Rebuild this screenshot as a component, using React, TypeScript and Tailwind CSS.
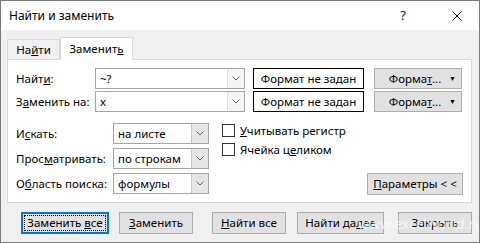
import React from 'react';

const font = { fontFamily: '"Noto Sans", "Liberation Sans", sans-serif' };

function Chevron() {
  return (
    <svg width="8" height="5" viewBox="0 0 8 5" className="text-[#606060]">
      <path d="M0.5 0.5 L4 4 L7.5 0.5" fill="none" stroke="currentColor" strokeWidth="1" />
    </svg>
  );
}

function Combo({ value, width, gray }: { value: string; width: string; gray?: boolean }) {
  return (
    <div className={`flex h-[21px] ${width} border border-[#a5a5a5] bg-white`}>
      <div className="flex flex-1 items-center pl-[4px] text-black">{value}</div>
      <div
        className={`flex w-[17px] items-center justify-center border-l ${
          gray ? 'border-[#c8c8c8] bg-[#e5e5e5]' : 'border-[#dcdcdc] bg-[#f5f5f5]'
        }`}
      >
        <Chevron />
      </div>
    </div>
  );
}

function Btn({ children, className = '' }: { children: React.ReactNode; className?: string }) {
  return (
    <div
      className={`flex h-[22px] items-center justify-center border border-[#adadad] bg-[#e1e1e1] text-black ${className}`}
    >
      {children}
    </div>
  );
}

function FormatBtn() {
  return (
    <div className="relative flex h-[21px] w-[88px] items-center justify-center border border-[#adadad] bg-[#e1e1e1] text-black">
      <span className="pr-[6px]">
        Форма<u>т</u>...
      </span>
      <span className="absolute right-[5px] top-[4px] text-[7px] leading-[12px]">▼</span>
    </div>
  );
}

function Check({ children }: { children: React.ReactNode }) {
  return (
    <div className="flex h-[19px] items-center">
      <div className="h-[13px] w-[13px] border border-[#333333] bg-white" />
      <span className="ml-[5px] text-black">{children}</span>
    </div>
  );
}

export default function App() {
  return (
    <div
      className="relative flex h-[243px] w-[480px] flex-col overflow-hidden border border-[#7a7a7a] bg-[#f0f0f0] text-[11.5px]"
      style={font}
    >
      {/* title bar */}
      <div className="flex h-[29px] shrink-0 items-center bg-white pl-[8px] text-[12px] text-black">
        <span>Найти и заменить</span>
        <span className="ml-auto mr-[46px] text-[13px] text-[#222]">?</span>
        <svg width="10" height="10" viewBox="0 0 10 10" className="mr-[17px]">
          <path d="M0.5 0.5 L9.5 9.5 M9.5 0.5 L0.5 9.5" stroke="#111" strokeWidth="1" />
        </svg>
      </div>

      {/* tabs */}
      <div className="flex items-end pl-[6px] pt-[7px]">
        <div className="flex h-[20px] w-[53px] items-center justify-center border border-b-0 border-[#d9d9d9] text-black">
          На<u>й</u>ти
        </div>
        <div className="relative z-10 -mb-px flex h-[23px] w-[73px] items-center justify-center border border-b-0 border-[#d9d9d9] bg-white text-black">
          Замени<span>т</span>
          <u>ь</u>
        </div>
      </div>

      {/* panel */}
      <div className="ml-[6px] flex h-[144px] w-[465px] flex-col border border-[#d9d9d9] bg-white px-[8px] pt-[8px]">
        <div className="flex h-[21px] items-center">
          <div className="w-[79px] text-black">
            Найт<u>и</u>:
          </div>
          <Combo value="~?" width="w-[150px]" />
          <div className="ml-[8px] flex h-[21px] w-[111px] items-center justify-center border border-black text-black">
            Формат не задан
          </div>
          <div className="ml-[10px]">
            <FormatBtn />
          </div>
        </div>
        <div className="mt-[2px] flex h-[21px] items-center">
          <div className="w-[79px] text-black">
            З<u>а</u>менить на:
          </div>
          <Combo value="x" width="w-[150px]" />
          <div className="ml-[8px] flex h-[21px] w-[111px] items-center justify-center border border-black text-black">
            Формат не задан
          </div>
          <div className="ml-[10px]">
            <FormatBtn />
          </div>
        </div>

        <div className="mt-[11px] flex">
          <div className="flex flex-col gap-[4px]">
            <div className="flex h-[21px] items-center">
              <div className="w-[97px] text-black">
                И<u>с</u>кать:
              </div>
              <Combo value="на листе" width="w-[96px]" gray />
            </div>
            <div className="flex h-[21px] items-center">
              <div className="w-[97px] text-black">
                Прос<u>м</u>атривать:
              </div>
              <Combo value="по строкам" width="w-[96px]" gray />
            </div>
            <div className="flex h-[21px] items-center">
              <div className="w-[97px] text-black">
                О<u>б</u>ласть поиска:
              </div>
              <Combo value="формулы" width="w-[96px]" gray />
            </div>
          </div>
          <div className="ml-[13px] mt-[-2px] flex flex-col">
            <Check>
              <u>У</u>читывать регистр
            </Check>
            <Check>
              Ячейка ц<u>е</u>ликом
            </Check>
          </div>
          <div className="ml-auto flex items-end">
            <Btn className="mb-[-1px] h-[21px] w-[96px]">
              <span>
                <u>П</u>араметры &lt; &lt;
              </span>
            </Btn>
          </div>
        </div>
      </div>

      {/* bottom buttons */}
      <div className="mt-[9px] flex pl-[20px]">
        <div className="flex h-[22px] w-[88px] items-center justify-center border-2 border-[#0078d7] bg-[#e1e1e1] text-black">
          <div className="flex h-[16px] w-[82px] items-center justify-center border border-dotted border-black">
            <span>
              Заменить <u>в</u>се
            </span>
          </div>
        </div>
        <Btn className="ml-[10px] w-[74px]">
          <span>
            <u>З</u>аменить
          </span>
        </Btn>
        <Btn className="ml-[19px] w-[74px]">
          <span>
            <u>Н</u>айти все
          </span>
        </Btn>
        <Btn className="ml-[11px] w-[87px]">
          <span>
            Найти да<u>л</u>ее
          </span>
        </Btn>
        <Btn className="ml-[14px] w-[74px]">
          <span>Закрыть</span>
        </Btn>
      </div>

      {/* watermark */}
      <div className="pointer-events-none absolute left-[357px] top-[213px] text-[14px] leading-[20px] text-white/70">
        www.excelworld.ru
      </div>
    </div>
  );
}
